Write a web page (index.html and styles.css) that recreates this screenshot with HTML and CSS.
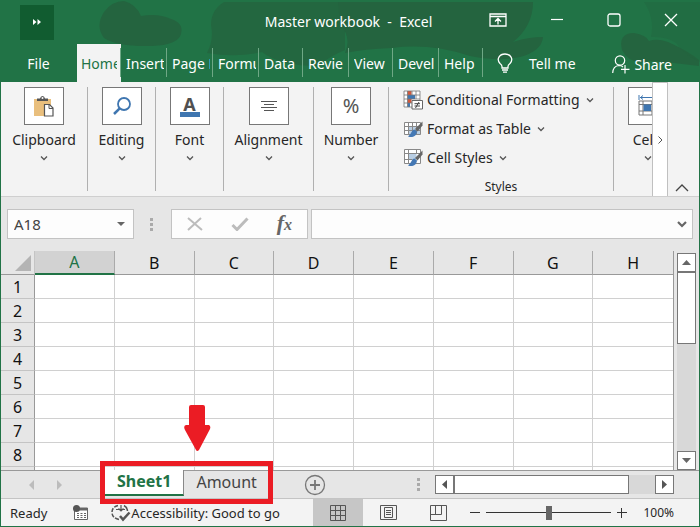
FILE: index.html
```html
<!DOCTYPE html>
<html lang="en">
<head>
<meta charset="utf-8">
<title>Master workbook - Excel</title>
<link rel="stylesheet" href="styles.css">
</head>
<body>
<svg class="defs" aria-hidden="true">
  <symbol id="chev" viewBox="0 0 8 6"><path d="M1 1.5 4 4.5 7 1.5" fill="none" stroke="#555" stroke-width="1.3"/></symbol>
  <symbol id="brush" viewBox="0 0 20 20"><path d="M19.5 2.5 12 10l2.500 2.500 5-6z" fill="#666"/><path d="M11.500 10.500c-3 0-2.500 4-6.500 7 4 1.500 8.500 0 9-5z" fill="#4478b4"/></symbol>
</svg>
<div class="window">
  <header class="header">
    <svg class="swirl" viewBox="0 0 700 82" preserveAspectRatio="none" aria-hidden="true">
      <g fill="#24643f">
        <path d="M104 12Q112 1 124 1Q136 4 141 16Q158 13 171 19Q184 23 181 34Q178 45 152 46Q118 47 104 38Q95 26 104 12z"/>
        <path d="M224 2H345V50Q330 56 318 66Q280 66 262 52Q236 58 207 53Q214 40 211 25Q211 10 224 2z" opacity=".8"/>
        <path d="M338 2H533Q533 26 513 42Q528 37 543 37Q542 51 520 57Q495 62 470 56Q430 43 392 48Q364 49 345 53Q352 38 340 24z"/>
        <path d="M622 50Q618 33 634 33Q646 35 649 41Q657 38 668 42Q688 51 699 60V66Q668 62 650 61Q630 66 622 50z"/>
        <path d="M644 2H700V62Q684 55 676 43Q667 36 651 37Q655 18 644 2z" opacity=".4"/>
      </g>
    </svg>
    <div class="titlebar">
      <button class="quick" aria-label="Quick access"><svg width="8" height="6" viewBox="0 0 8 6"><path d="M0 0 3.500 3 0 6zM4.500 0 8 3 4.500 6z" fill="#fff"/></svg></button>
      <h1 class="title">Master workbook&nbsp; -&nbsp; Excel</h1>
      <div class="controls">
        <button aria-label="Ribbon display options"><svg width="18" height="14" viewBox="0 0 18 14" fill="none" stroke="#fff"><path d="M1 1H17V13H1zM1 3.500H17M9 11.500V5.500M6 8.500 9 5.500 12 8.500" stroke-width="1.300"/></svg></button>
        <button aria-label="Minimize"><svg width="14" height="14" viewBox="0 0 14 14"><path d="M1 6.500H13" stroke="#fff" stroke-width="1.200"/></svg></button>
        <button aria-label="Maximize"><svg width="14" height="14" viewBox="0 0 14 14"><rect x="1" y="1" width="12" height="12" rx="2" fill="none" stroke="#fff" stroke-width="1.300"/></svg></button>
        <button aria-label="Close"><svg width="14" height="14" viewBox="0 0 14 14"><path d="M1 1 13 13M13 1 1 13" stroke="#fff" stroke-width="1.300"/></svg></button>
      </div>
    </div>
    <nav class="menu">
      <button class="file">File</button>
      <button class="tab active"><span>Home</span></button>
      <button class="tab"><span>Insert</span></button>
      <button class="tab"><span>Page L</span></button>
      <button class="tab"><span>Formu</span></button>
      <button class="tab narrow"><span>Data</span></button>
      <button class="tab"><span>Revie</span></button>
      <button class="tab narrow"><span>View</span></button>
      <button class="tab"><span>Devel</span></button>
      <button class="tab narrow"><span>Help</span></button>
      <button class="tell"><svg width="16" height="20" viewBox="0 0 16 20" fill="none" stroke="#fff" stroke-width="1.300"><path d="M5 15V13.500Q5 12 3 10.500C-1 6 2.500 1 8 1S17 6 13 10.500Q11 12 11 13.500V15zM5 17H11M6 19.200H10"/></svg>Tell me</button>
      <button class="share"><svg width="18" height="19" viewBox="0 0 18 19" fill="none" stroke="#fff" stroke-width="1.200"><circle cx="8" cy="5.500" r="4.700"/><path d="M.7 18Q1 11 7 10.500Q9.500 10.500 11 12M13 10V18.500M9 14.300H17.500"/></svg>Share</button>
    </nav>
  </header>

  <section class="ribbon" aria-label="Ribbon">
    <div class="groups">
      <button class="group wide">
        <span class="tile"><svg width="20" height="21" viewBox="0 0 20 21"><path d="M0 3H17V20H0z" fill="#e9bf7d"/><path d="M3 5V2.500H6Q6.500 0 8.500 0T11 2.500H14V5z" fill="#555"/><circle cx="8.500" cy="2" r="1" fill="#fff"/><path d="M10.500 8.500H15.500L19 12V20H10.500z" fill="#fff" stroke="#555" stroke-width="1.200"/><path d="M15 8.500V12.500H19" fill="none" stroke="#555"/></svg></span>
        <span>Clipboard</span><svg class="chev"><use href="#chev"/></svg>
      </button>
      <button class="group">
        <span class="tile"><svg width="20" height="20" viewBox="0 0 20 20" fill="none" stroke="#3f76b0"><circle cx="12" cy="8" r="6" stroke-width="1.800"/><path d="M7.700 12.300 2 18" stroke-width="2.500"/></svg></span>
        <span>Editing</span><svg class="chev"><use href="#chev"/></svg>
      </button>
      <button class="group">
        <span class="tile font"><b>A</b></span>
        <span>Font</span><svg class="chev"><use href="#chev"/></svg>
      </button>
      <button class="group wider">
        <span class="tile"><svg width="16" height="12" viewBox="0 0 16 12"><path d="M0 1.500H16M3 4.500H13M0 7.500H16M3 10.500H13" stroke="#555"/></svg></span>
        <span>Alignment</span><svg class="chev"><use href="#chev"/></svg>
      </button>
      <button class="group mid">
        <span class="tile percent">%</span>
        <span>Number</span><svg class="chev"><use href="#chev"/></svg>
      </button>
      <div class="styles">
        <button><svg width="20" height="20" viewBox="0 0 20 20"><path d="M1 1H17V17H1z" fill="#fff"/><path d="M4.500 1H8.500V5H4.500zM4.500 9H8.500V13H4.500z" fill="#d2573b"/><path d="M4.500 5H12V9H4.500zM4.500 13H7V17H4.500z" fill="#3f76b0"/><path d="M1 1H17V17H1zM4.500 1V17M1 5H17M1 9H17M1 13H17M9 1V5M13 1V9" fill="none" stroke="#777" stroke-width=".8"/><path d="M9 10.500H19.500V19H9z" fill="#fff" stroke="#666"/><path d="M11.500 13.700H17M11.500 16H17M16 12 12.500 18" stroke="#444"/></svg>Conditional Formatting<svg class="chev"><use href="#chev"/></svg></button>
        <button><svg width="20" height="20" viewBox="0 0 20 20"><path d="M1.500 3.500H17.500V15.500H1.500z" fill="#fff"/><path d="M5.500 7.500H17.500V15.500H5.500z" fill="#b9cee3"/><path d="M1.500 3.500H17.500V15.500H1.500zM5.500 3.500V15.500M9.500 3.500V15.500M13.500 3.500V15.500M1.500 7.500H17.500M1.500 11.500H17.500" fill="none" stroke="#888"/><use href="#brush"/></svg>Format as Table<svg class="chev"><use href="#chev"/></svg></button>
        <button><svg width="20" height="20" viewBox="0 0 20 20"><path d="M1.500 1.500H17.500V15.500H1.500z" fill="#fff"/><path d="M5.500 5.500H13.500V11.500H5.500z" fill="#b9cee3"/><path d="M1.500 1.500H17.500V15.500H1.500zM5.500 1.500V15.500M13.500 1.500V5.500M1.500 5.500H17.500M1.500 11.500H9.500" fill="none" stroke="#888"/><use href="#brush"/></svg>Cell Styles<svg class="chev"><use href="#chev"/></svg></button>
        <span class="caption">Styles</span>
      </div>
      <button class="group cells">
        <span class="tile"><svg width="20" height="22" viewBox="0 0 20 22" fill="none"><path d="M1 0V5M19 0V5M2 2.500H18M5 .5 2.500 2.500 5 4.500M15 .5 17.500 2.500 15 4.500" stroke="#3f76b0"/><path d="M1 6H19V20H1zM5 6V20M1 9.500H19M1 16H19M14 6V20" stroke="#777"/><path d="M5.500 9.500H13V16H5.500z" fill="#3f76b0"/></svg></span>
        <span>Cells</span><svg class="chev"><use href="#chev"/></svg>
      </button>
    </div>
    <button class="more" aria-label="More groups"><svg width="5" height="8" viewBox="0 0 5 8"><path d="M.5.5 4 4 .5 7.500" fill="none" stroke="#555"/></svg></button>
    <button class="collapse" aria-label="Collapse ribbon"><svg width="14" height="8" viewBox="0 0 14 8"><path d="M1 7 7 1 13 7" fill="none" stroke="#444" stroke-width="1.300"/></svg></button>
  </section>

  <section class="formula" aria-label="Formula bar">
    <div class="namebox"><input value="A18" aria-label="Name box"><svg width="8" height="4" viewBox="0 0 8 4"><path d="M0 0H8L4 4z" fill="#666"/></svg></div>
    <span class="dots"></span>
    <div class="fx">
      <button aria-label="Cancel"><svg width="16" height="14" viewBox="0 0 16 14"><path d="M1 1 15 13M14 1 1 13" stroke="#bcbcbc" stroke-width="2"/></svg></button>
      <button aria-label="Enter"><svg width="18" height="14" viewBox="0 0 18 14"><path d="M1.500 8 6 12.500 16.500 1.500" fill="none" stroke="#bcbcbc" stroke-width="3"/></svg></button>
      <button aria-label="Insert function"><i>f<small>x</small></i></button>
    </div>
    <div class="entry"><input aria-label="Formula"><svg width="10" height="7" viewBox="0 0 10 7"><path d="M1 1 5 5 9 1" fill="none" stroke="#666" stroke-width="2.200"/></svg></div>
  </section>

  <main class="sheet">
    <div class="gridwrap">
      <table class="grid">
        <thead><tr><th class="corner"><svg width="16" height="16" viewBox="0 0 16 16"><path d="M16 0V16H0z" fill="#b4b4b4"/></svg></th><th class="sel">A</th><th>B</th><th>C</th><th>D</th><th>E</th><th>F</th><th>G</th><th>H</th></tr></thead>
        <tbody>
          <tr><th>1</th><td></td><td></td><td></td><td></td><td></td><td></td><td></td><td></td></tr>
          <tr><th>2</th><td></td><td></td><td></td><td></td><td></td><td></td><td></td><td></td></tr>
          <tr><th>3</th><td></td><td></td><td></td><td></td><td></td><td></td><td></td><td></td></tr>
          <tr><th>4</th><td></td><td></td><td></td><td></td><td></td><td></td><td></td><td></td></tr>
          <tr><th>5</th><td></td><td></td><td></td><td></td><td></td><td></td><td></td><td></td></tr>
          <tr><th>6</th><td></td><td></td><td></td><td></td><td></td><td></td><td></td><td></td></tr>
          <tr><th>7</th><td></td><td></td><td></td><td></td><td></td><td></td><td></td><td></td></tr>
          <tr><th>8</th><td></td><td></td><td></td><td></td><td></td><td></td><td></td><td></td></tr>
          <tr><th></th><td></td><td></td><td></td><td></td><td></td><td></td><td></td><td></td></tr>
        </tbody>
      </table>
    </div>
    <div class="vscroll">
      <button aria-label="Scroll up"><svg width="9" height="5" viewBox="0 0 9 5"><path d="M0 5H9L4.500 0z" fill="#666"/></svg></button>
      <span class="thumb"></span>
      <span class="track"></span>
      <button aria-label="Scroll down"><svg width="9" height="5" viewBox="0 0 9 5"><path d="M0 0H9L4.500 5z" fill="#666"/></svg></button>
    </div>
  </main>

  <section class="sheetbar" aria-label="Sheets">
    <div class="arrows">
      <button aria-label="Previous sheet"><svg width="5" height="10" viewBox="0 0 5 10"><path d="M5 0V10L0 5z" fill="#bcbcbc"/></svg></button>
      <button aria-label="Next sheet"><svg width="5" height="10" viewBox="0 0 5 10"><path d="M0 0V10L5 5z" fill="#bcbcbc"/></svg></button>
    </div>
    <div class="sheets">
      <button class="sheettab current">Sheet1</button>
      <button class="sheettab">Amount</button>
      <span class="callout"></span>
      <svg class="pointer" width="27" height="47" viewBox="0 0 27 47"><path d="M7 0H19Q21 0 21 2V20H25Q27 21 26 24L15 45Q13 47 12 45L1 25Q-1 21 2 20H5V2Q5 0 7 0z" fill="#eb1c24"/></svg>
    </div>
    <button class="add" aria-label="New sheet"><svg width="22" height="22" viewBox="0 0 22 22" fill="none" stroke="#777"><circle cx="11" cy="11" r="9.500" stroke-width="1.300"/><path d="M11 6V16M6 11H16" stroke-width="1.800"/></svg></button>
    <span class="dots"></span>
    <div class="hscroll">
      <button aria-label="Scroll left"><svg width="5" height="9" viewBox="0 0 5 9"><path d="M5 0V9L0 4.500z" fill="#555"/></svg></button>
      <span class="thumb"></span>
      <span class="track"></span>
      <button aria-label="Scroll right"><svg width="5" height="9" viewBox="0 0 5 9"><path d="M0 0V9L5 4.500z" fill="#555"/></svg></button>
    </div>
  </section>

  <footer class="status">
    <span>Ready</span>
    <svg class="macro" width="16" height="16" viewBox="0 0 16 16"><path d="M2.500 3H14.500V14.500H1.500V6" fill="#fff" stroke="#666"/><path d="M6 3H15V5.500H6z" fill="#666"/><circle cx="3.500" cy="3.500" r="3.500" fill="#555"/><path d="M4 8.500H13M4 10.500H13M4 12.500H13" stroke="#666" stroke-dasharray="2 1.500"/></svg>
    <button class="access"><svg width="20" height="18" viewBox="0 0 20 18" fill="none" stroke="#555" stroke-width="1.500"><path d="M7 1.500Q1 3 1 8.500T8 15.500" stroke-dasharray="4 1.500"/><path d="M13 1.500Q16 3 16.500 7"/><path d="M10 1V7M5 5.500H14M7.500 4.500 10 7 12.500 4.500" stroke-width="1.200"/><path d="M9 12 12 15.500 18.500 8.500" stroke-width="2.500"/></svg>Accessibility: Good to go</button>
    <div class="views">
      <button class="on" aria-label="Normal view"><svg width="16" height="16" viewBox="0 0 16 16"><path d="M.5.5H15.500V15.500H.5zM5.500 0V16M10.500 0V16M0 5.500H16M0 10.500H16" fill="none" stroke="#555"/></svg></button>
      <button aria-label="Page layout view"><svg width="17" height="16" viewBox="0 0 17 16"><path d="M.5.5H16.500V14.500H.5zM4.500 2.500H12.500V12.500H4.500zM6 5.500H11M6 7.500H11M6 9.500H11" fill="none" stroke="#555"/></svg></button>
      <button aria-label="Page break view"><svg width="17" height="16" viewBox="0 0 17 16"><path d="M.5.5H16.500V15.500H.5zM5.500 0V9.500M11.500 0V9.500M0 9.500H11.500" fill="none" stroke="#555"/></svg></button>
    </div>
    <div class="zoom">
      <button aria-label="Zoom out"><svg width="10" height="10" viewBox="0 0 10 10"><path d="M0 4.500H10" stroke="#333"/></svg></button>
      <input type="range" min="0" max="100" value="50" aria-label="Zoom">
      <button aria-label="Zoom in"><svg width="10" height="10" viewBox="0 0 10 10"><path d="M0 4.500H10M4.500 0V10" stroke="#333"/></svg></button>
      <span class="level">100%</span>
    </div>
  </footer>
</div>
</body>
</html>
```
FILE: styles.css
```css
* { box-sizing: border-box; }
body {
  margin: 0;
  font-family: "Noto Sans", "Open Sans", sans-serif;
  font-size: 14px;
  color: #262626;
}
button, input { font: inherit; color: inherit; border: 0; padding: 0; margin: 0; background: none; }
button { display: flex; align-items: center; justify-content: center; white-space: nowrap; }
svg { flex: none; display: block; }
.defs { position: absolute; width: 0; height: 0; }
.chev { width: 8px; height: 6px; }

.window {
  display: flex;
  flex-direction: column;
  min-height: 100vh;
  border: 1px solid #217346;
  border-top: 0;
  background: #e6e6e6;
}

/* Title bar and menu */
.header { position: relative; background: #217346; color: #fff; margin: 0 -1px; }
.swirl { position: absolute; inset: 0; width: 100%; height: 100%; }
.titlebar { position: relative; display: flex; align-items: center; height: 44px; padding: 0 22px 0 20px; }
.quick { width: 34px; height: 35px; background: #115c30; }
.title { flex: 1; margin: 0; padding-left: 154px; text-align: center; font-size: 14px; font-weight: 400; line-height: 48px; }
.controls { display: flex; align-self: flex-start; gap: 43px; height: 40px; }
.menu { position: relative; display: flex; align-items: stretch; height: 38px; padding-right: 28px; }
.file { width: 77px; }
.tab { width: 46px; padding: 0 3px 0 5px; position: relative; flex: none; }
.tab span { flex: 1; overflow: hidden; text-align: left; }
.tab::after { content: ""; position: absolute; right: 0; top: 4px; height: 29px; border-right: 1px solid #6fa886; }
.narrow { width: 44px; }
.tab.active { width: 44px; padding: 0 4px; background: #f3f3f3; color: #217346; }
.tell { gap: 16px; padding-left: 14px; }
.share { gap: 4px; margin-left: auto; padding-top: 2px; }

/* Ribbon */
.ribbon { display: flex; height: 115px; background: #f3f3f3; border-bottom: 1px solid #cfcfcf; }
.groups { display: flex; flex: 1; min-width: 0; overflow: hidden; padding: 5px 0; }
.group { flex: none; flex-direction: column; justify-content: flex-start; width: 68px; border-right: 1px solid #b0b0b0; line-height: 20px; }
.wide { width: 87px; }
.wider { width: 90px; }
.mid { width: 75px; }
.cells { border: 0; }
.tile { display: flex; align-items: center; justify-content: center; width: 40px; height: 38px; margin-bottom: 5px; border: 1px solid #777; background: #fff; }
.group .chev { margin-top: 5px; }
.font b { width: 20px; border-bottom: 5px solid #3f76b0; font-size: 18px; line-height: 16px; color: #505050; }
.percent { font-size: 20px; color: #555; }
.styles { flex: none; display: flex; flex-direction: column; width: 225px; padding-left: 14px; border-right: 1px solid #b0b0b0; }
.styles button { flex: none; justify-content: flex-start; gap: 4px; height: 29px; padding-bottom: 4px; }
.styles .chev { margin-left: 2px; }
.caption { margin: 4px 0 0 -14px; font-size: 12px; line-height: 17px; text-align: center; }
.more { width: 16px; background: #fff; border: 1px solid #c0c0c0; border-bottom: 0; }
.collapse { width: 31px; align-items: flex-end; padding: 0 4px 4px 0; }

/* Formula bar */
.formula { display: flex; align-items: center; height: 54px; padding: 0 6px; }
.namebox, .fx, .entry { display: flex; align-items: center; height: 30px; background: #fdfdfd; border: 1px solid #c3c3c3; }
.namebox { width: 127px; padding: 0 8px 0 6px; color: #444; font-size: 15px; }
.namebox input, .entry input { flex: 1; min-width: 0; }
.dots { width: 3px; height: 13px; background: repeating-linear-gradient(#aaa 0 3px, transparent 3px 5px); }
.formula .dots { margin: 0 18px 0 16px; }
.fx { width: 137px; justify-content: space-between; padding: 0 15px; margin-right: 3px; }
.fx i { font: italic 700 22px/24px "Liberation Serif", serif; color: #666; }
.fx small { font-size: 16px; }
.entry { flex: 1; padding-right: 5px; }

/* Worksheet */
.sheet { display: flex; flex: 1; height: 219px; padding-right: 3px; gap: 3px; }
.gridwrap { flex: 1; min-width: 0; height: 219px; overflow: hidden; border-right: 1px solid #999; }
.grid { width: 100%; table-layout: fixed; border-spacing: 0; font-size: 16px; color: #111; }
.grid th { height: 24px; padding: 0; font-weight: 400; line-height: 22px; border-right: 1px solid #aaa; border-bottom: 1px solid #c4c4c4; }
.grid thead th { border-bottom-color: #999; }
.grid th:first-child { width: 34px; border-right-color: #999; }
.grid thead .corner { border-right-color: #c4c4c4; }
.grid th:last-child { border-right: 0; }
.corner svg { margin-left: 14px; }
.grid thead .sel { background: #d2d2d2; color: #217346; border-bottom: 2px solid #217346; }
.grid td { padding: 0; background: #fff; border-right: 1px solid #d0d0d0; border-bottom: 1px solid #d0d0d0; }
.grid td:last-child { border-right: 0; }
.vscroll { display: flex; flex-direction: column; width: 19px; padding-top: 2px; }
.vscroll button, .hscroll button { flex: none; width: 19px; height: 19px; background: #fff; border: 1px solid #777; }
.thumb { background: #fff; border: 1px solid #777; }
.track { flex: 1; background: #d8d8d8; }
.vscroll .thumb { height: 72px; }

/* Sheet tabs */
.sheetbar { display: flex; height: 29px; align-items: center; border-top: 1px solid #999; border-bottom: 1px solid #c4c4c4; padding-right: 25px; }
.arrows { display: flex; gap: 23px; width: 104px; padding-left: 28px; }
.sheets { position: relative; display: flex; align-self: stretch; margin-top: -1px; }
.sheettab { height: 26px; padding: 0 12px 4px; font-size: 16px; color: #444; border-top: 1px solid #999; }
.current { padding: 0 12px 2px; font-weight: 700; color: #217346; background: #fff; border-top: 0; border-right: 1px solid #888; border-bottom: 2px solid #217346; }
.callout { position: absolute; inset: -9px -4px -6px -5px; border: 5px solid #eb1c24; }
.pointer { position: absolute; left: 79px; top: -65px; }
.add { margin-left: 35px; }
.sheetbar .dots { margin-left: auto; margin-right: 15px; }
.hscroll { display: flex; width: 239px; }
.hscroll .thumb { flex: 0 0 175px; }

/* Status bar */
.status { display: flex; align-items: center; height: 27px; background: #f3f3f3; padding: 0 25px 0 9px; font-size: 13px; }
.macro { margin-left: 26px; }
.access { margin-left: 22px; }
.views { display: flex; align-self: stretch; margin: 0 7px 0 auto; }
.views button { width: 50px; }
.views .on { background: #c6c6c6; }
.zoom { display: flex; align-items: center; }
.zoom input { appearance: none; width: 125px; height: 14px; margin: 0 6px; background: linear-gradient(#333, #333) center / 100% 1px no-repeat; }
.zoom input::-webkit-slider-thumb { appearance: none; width: 6px; height: 14px; background: #666; }
.level { margin-left: 16px; font-size: 12px; }
```
